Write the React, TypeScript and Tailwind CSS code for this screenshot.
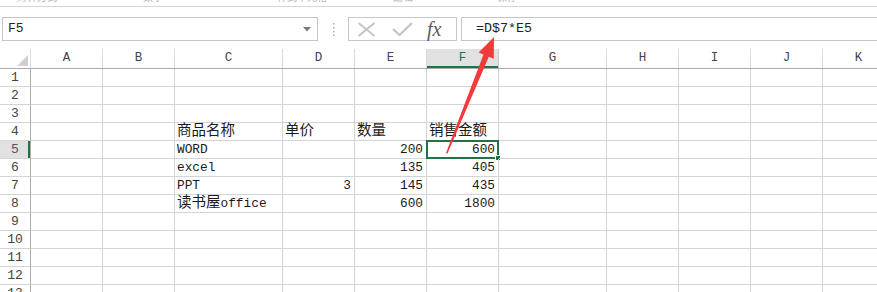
import React from "react";

const MONO = { fontFamily: '"Liberation Mono", "Noto Sans CJK SC", monospace' };

const cols = [
  { k: "A", w: 72 },
  { k: "B", w: 72 },
  { k: "C", w: 108 },
  { k: "D", w: 72 },
  { k: "E", w: 72 },
  { k: "F", w: 72 },
  { k: "G", w: 108 },
  { k: "H", w: 72 },
  { k: "I", w: 72 },
  { k: "J", w: 72 },
  { k: "K", w: 72 },
];

type Cell = { t: string; right?: boolean };
const data: Record<number, Record<string, Cell>> = {
  4: { C: { t: "商品名称" }, D: { t: "单价" }, E: { t: "数量" }, F: { t: "销售金额" } },
  5: { C: { t: "WORD" }, E: { t: "200", right: true }, F: { t: "600", right: true } },
  6: { C: { t: "excel" }, E: { t: "135", right: true }, F: { t: "405", right: true } },
  7: { C: { t: "PPT" }, D: { t: "3", right: true }, E: { t: "145", right: true }, F: { t: "435", right: true } },
  8: { C: { t: "读书屋office" }, E: { t: "600", right: true }, F: { t: "1800", right: true } },
};

function Txt({ s }: { s: string }) {
  const parts: { cjk: boolean; v: string }[] = [];
  for (const ch of s) {
    const cjk = /[\u4e00-\u9fff]/.test(ch);
    const last = parts[parts.length - 1];
    if (last && last.cjk === cjk) last.v += ch;
    else parts.push({ cjk, v: ch });
  }
  return (
    <span className="block leading-[17px]">
      {parts.map((p, i) =>
        p.cjk ? (
          <span key={i} className="text-[14.5px]" style={{ fontFamily: '"Noto Sans CJK SC", sans-serif' }}>
            {p.v}
          </span>
        ) : (
          <span key={i}>{p.v}</span>
        )
      )}
    </span>
  );
}

export default function App() {
  const rows = Array.from({ length: 13 }, (_, i) => i + 1);
  return (
    <div className="relative w-[877px] h-[292px] overflow-hidden bg-white text-[#1a1a1a]" style={MONO}>
      {/* ribbon remnant */}
      <div className="h-[7px] overflow-hidden border-b border-[#d5d5d5] flex text-[10px] leading-[10px] text-[#b5b5b5]">
        <span className="ml-[17px] -mt-[6px]">对齐方式</span>
        <span className="ml-[16px] -mt-[6px]">⌐</span>
        <span className="ml-[64px] -mt-[6px]">数字</span>
        <span className="ml-[60px] -mt-[6px]">⌐</span>
        <span className="ml-[48px] -mt-[6px]">样式单元格</span>
        <span className="ml-[32px] -mt-[6px]">⌐</span>
        <span className="ml-[28px] -mt-[6px]">编辑</span>
        <span className="ml-[30px] -mt-[6px]">⌐</span>
        <span className="ml-[48px] -mt-[6px]">保存</span>
      </div>

      {/* formula bar */}
      <div className="flex items-start pt-[10px] h-[42px]">
        <div className="ml-[2px] w-[316px] h-[24px] border border-[#c6c6c6] flex items-center justify-between pl-[5px] pr-[6px]">
          <span className="text-[13px] text-[#222]">F5</span>
          <svg width="8" height="5" viewBox="0 0 8 5">
            <polygon points="0,0 8,0 4,4.5" fill="#7a7a7a" />
          </svg>
        </div>
        <div className="w-[30px] h-[24px] flex items-center justify-center">
          <svg width="3" height="13" viewBox="0 0 3 13">
            <rect x="1" y="0" width="1.5" height="1.5" fill="#b0b0b0" />
            <rect x="1" y="4" width="1.5" height="1.5" fill="#b0b0b0" />
            <rect x="1" y="8" width="1.5" height="1.5" fill="#b0b0b0" />
            <rect x="1" y="11.5" width="1.5" height="1.5" fill="#b0b0b0" />
          </svg>
        </div>
        <div className="w-[109px] h-[24px] border border-[#c6c6c6] flex items-center">
          <svg className="ml-[8px]" width="19" height="15" viewBox="0 0 19 15">
            <path d="M1.5 1 L17.5 14 M17.5 1 L1.5 14" stroke="#c4c4c4" strokeWidth="2" fill="none" />
          </svg>
          <svg className="ml-[16px]" width="21" height="14" viewBox="0 0 21 14">
            <path d="M1 7 L7.5 13 L20 1" stroke="#c4c4c4" strokeWidth="2.2" fill="none" />
          </svg>
          <span
            className="ml-[14px] text-[20px] leading-[20px] italic text-[#5a5a5a]"
            style={{ fontFamily: '"Liberation Serif", serif' }}
          >
            fx
          </span>
        </div>
        <div className="ml-[4px] flex-1 -mr-[10px] h-[24px] border border-[#c6c6c6] flex items-center pl-[14px] text-[13.3px] text-[#222]">
          =D$7*E5
        </div>
      </div>

      {/* header row */}
      <div className="flex h-[20px] border-b border-[#ababab]">
        <div className="w-[31px] shrink-0 border-r border-[#dadada] relative flex items-end justify-end pr-[2px] pb-[2px]">
          <svg width="11" height="11" viewBox="0 0 11 11">
            <polygon points="11,0 11,11 0,11" fill="#cfcfcf" />
          </svg>
        </div>
        {cols.map((c) => (
          <div
            key={c.k}
            style={{ width: c.w }}
            className={
              "shrink-0 border-r flex items-center justify-center text-[12.5px] " +
              (c.k === "F"
                ? "bg-[#e1e1e1] text-[#217346] border-[#c9c9c9] shadow-[inset_0_-2px_0_#217346]"
                : "text-[#444] border-[#dadada]")
            }
          >
            {c.k}
          </div>
        ))}
      </div>

      {/* rows */}
      {rows.map((r) => (
        <div key={r} className="flex h-[18px]">
          <div
            className={
              "w-[31px] shrink-0 border-b border-r flex items-center justify-center text-[13px] " +
              (r === 5
                ? "bg-[#e1e1e1] text-[#555] border-b-[#d4d4d4] border-r-[#ababab] shadow-[inset_-2px_0_0_#217346]"
                : "text-[#444] border-b-[#d4d4d4] border-r-[#ababab]")
            }
          >
            {r}
          </div>
          {cols.map((c) => {
            const cell = data[r]?.[c.k];
            const sel = r === 5 && c.k === "F";
            return (
              <div
                key={c.k}
                style={{ width: c.w }}
                className={
                  "shrink-0 border-b border-r border-[#d4d4d4] flex items-end whitespace-nowrap text-[12.8px] relative " +
                  (cell?.right ? "justify-end pr-[3px]" : "justify-start pl-[2px]")
                }
              >
                {cell && <Txt s={cell.t} />}
                {sel && (
                  <>
                    <div className="absolute -left-[1px] -top-[1px] -right-[1px] -bottom-[1px] border-2 border-[#217346]" />
                    <div className="absolute -right-[3px] -bottom-[3px] w-[6px] h-[6px] bg-[#217346] border border-white" />
                  </>
                )}
              </div>
            );
          })}
        </div>
      ))}

      {/* red arrow annotation */}
      <svg className="absolute left-0 top-0 pointer-events-none" width="877" height="292">
        <polygon
          points="446,153 483.5,54.5 478.5,52.5 494,37 493.8,58.8 488.8,56.8 447.5,153.5"
          fill="#f23a3a"
        />
      </svg>
    </div>
  );
}
